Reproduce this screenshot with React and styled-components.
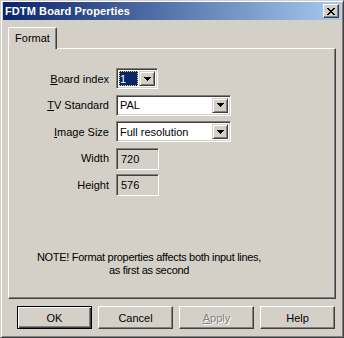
import React from 'react';
import styled, { createGlobalStyle } from 'styled-components';

const Global = createGlobalStyle`
  html, body {
    margin: 0;
    padding: 0;
    background: #D4D0C8;
  }
  body {
    font-family: "Liberation Sans", Arial, sans-serif;
    font-size: 11px;
    color: #000;
  }
`;

const Window = styled.div`
  width: 344px;
  height: 338px;
  box-sizing: border-box;
  border: 1px solid;
  border-color: #D4D0C8 #404040 #404040 #D4D0C8;
  box-shadow: inset 1px 1px #fff, inset -1px -1px #808080;
  padding: 1px 2px 2px 2px;
  background: #D4D0C8;
  display: flex;
  flex-direction: column;
`;

const TitleBar = styled.div`
  height: 18px;
  display: flex;
  align-items: center;
  padding-left: 2px;
  background: linear-gradient(to right, #0A246A, #A6CAF0);
`;

const Title = styled.span`
  flex: 1;
  color: #fff;
  font-weight: bold;
  font-size: 11px;
  letter-spacing: 0.1px;
`;

const CloseBox = styled.div`
  width: 16px;
  height: 14px;
  margin-right: 2px;
  box-sizing: border-box;
  background: #D4D0C8;
  border: 1px solid;
  border-color: #fff #404040 #404040 #fff;
  box-shadow: inset -1px -1px #808080;
  display: flex;
  align-items: center;
  justify-content: center;
`;

const Body = styled.div`
  flex: 1;
  display: flex;
  flex-direction: column;
  padding: 7px 5px 0 5px;
`;

const TabStrip = styled.div`
  display: flex;
  height: 21px;
`;

const Tab = styled.div`
  position: relative;
  z-index: 1;
  width: 49px;
  height: 22px;
  box-sizing: border-box;
  background: #D4D0C8;
  border-left: 1px solid #fff;
  border-top: 1px solid #fff;
  border-right: 1px solid #404040;
  border-radius: 2px 2px 0 0;
  box-shadow: inset -1px 0 #808080;
  display: flex;
  justify-content: center;
  padding-top: 4px;
`;

const Panel = styled.div`
  width: 328px;
  height: 251px;
  box-sizing: border-box;
  border: 1px solid;
  border-color: #fff #404040 #404040 #fff;
  box-shadow: inset -1px -1px #808080;
  display: flex;
  flex-direction: column;
  padding-top: 19px;
`;

const Form = styled.div`
  display: grid;
  grid-template-columns: 100px auto;
  grid-auto-rows: 21px;
  column-gap: 7px;
  row-gap: 5.5px;
  justify-items: start;
`;

const Label = styled.label`
  justify-self: end;
  align-self: center;
  white-space: nowrap;
  u { text-decoration: underline; text-underline-offset: 1px; }
`;

const Combo = styled.div`
  width: ${p => p.$w}px;
  height: 21px;
  box-sizing: border-box;
  border: 1px solid;
  border-color: #808080 #fff #fff #808080;
  box-shadow: inset 1px 1px #404040, inset -1px -1px #D4D0C8;
  background: #fff;
  display: flex;
  align-items: stretch;
  padding: 2px;
`;

const ComboText = styled.div`
  flex: 1;
  display: flex;
  align-items: center;
  padding-left: 1px;
`;

const Selected = styled.span`
  flex: 1;
  align-self: stretch;
  margin-right: 1px;
  background: #0A246A;
  color: #fff;
  outline: 1px dotted #E8E070;
  outline-offset: -1px;
  display: flex;
  align-items: center;
  padding-left: 1px;
`;

const DropButton = styled.div`
  width: 16px;
  box-sizing: border-box;
  background: #D4D0C8;
  border: 1px solid;
  border-color: #D4D0C8 #404040 #404040 #D4D0C8;
  box-shadow: inset 1px 1px #fff, inset -1px -1px #808080;
  display: flex;
  align-items: center;
  justify-content: center;
`;

const Field = styled.div`
  width: 43px;
  height: 22px;
  box-sizing: border-box;
  border: 1px solid;
  border-color: #808080 #fff #fff #808080;
  box-shadow: inset 1px 1px #404040, inset -1px -1px #D4D0C8;
  background: #D4D0C8;
  display: flex;
  align-items: center;
  padding-left: 4px;
`;

const Note = styled.div`
  margin: 56px 0 0 24px;
  width: 232px;
  text-align: center;
  line-height: 13px;
  white-space: nowrap;
  letter-spacing: -0.3px;
`;

const ButtonRow = styled.div`
  display: flex;
  gap: 6px;
  margin: 7px 0 0 9px;
`;

const Button = styled.div`
  width: 75px;
  height: 23px;
  box-sizing: border-box;
  background: #D4D0C8;
  border: 1px solid;
  border-color: ${p => (p.$default ? '#000' : '#fff #404040 #404040 #fff')};
  box-shadow: ${p =>
    p.$default
      ? 'inset 1px 1px #fff, inset -1px -1px #404040, inset -2px -2px #808080'
      : 'inset -1px -1px #808080'};
  display: flex;
  align-items: center;
  justify-content: center;
  color: ${p => (p.$disabled ? '#808080' : '#000')};
  text-shadow: ${p => (p.$disabled ? '1px 1px #fff' : 'none')};
  u { text-decoration: underline; text-underline-offset: 1px; }
`;

const Arrow = () => (
  <svg width="7" height="4" viewBox="0 0 7 4">
    <path d="M0 0h7v1H0zM1 1h5v1H1zM2 2h3v1H2zM3 3h1v1H3z" fill="#000" />
  </svg>
);

const CloseIcon = () => (
  <svg width="8" height="7" viewBox="0 0 8 7">
    <path
      d="M0 0h2v1H0zM6 0h2v1H6zM1 1h2v1H1zM5 1h2v1H5zM2 2h4v1H2zM3 3h2v1H3zM2 4h4v1H2zM1 5h2v1H1zM5 5h2v1H5zM0 6h2v1H0zM6 6h2v1H6z"
      fill="#000"
    />
  </svg>
);

const ComboBox = ({ width, value, selected }) => (
  <Combo $w={width}>
    {selected ? <Selected>{value}</Selected> : <ComboText>{value}</ComboText>}
    <DropButton>
      <Arrow />
    </DropButton>
  </Combo>
);

export default function App() {
  return (
    <>
      <Global />
      <Window>
        <TitleBar>
          <Title>FDTM Board Properties</Title>
          <CloseBox>
            <CloseIcon />
          </CloseBox>
        </TitleBar>
        <Body>
          <TabStrip>
            <Tab>Format</Tab>
          </TabStrip>
          <Panel>
            <Form>
              <Label><u>B</u>oard index</Label>
              <ComboBox width={42} value="1" selected />
              <Label><u>T</u>V Standard</Label>
              <ComboBox width={115} value="PAL" />
              <Label><u>I</u>mage Size</Label>
              <ComboBox width={115} value="Full resolution" />
              <Label>Width</Label>
              <Field>720</Field>
              <Label>Height</Label>
              <Field>576</Field>
            </Form>
            <Note>
              NOTE! Format properties affects both input lines,
              <br />
              as first as second
            </Note>
          </Panel>
          <ButtonRow>
            <Button $default>OK</Button>
            <Button>Cancel</Button>
            <Button $disabled><u>A</u>pply</Button>
            <Button>Help</Button>
          </ButtonRow>
        </Body>
      </Window>
    </>
  );
}
